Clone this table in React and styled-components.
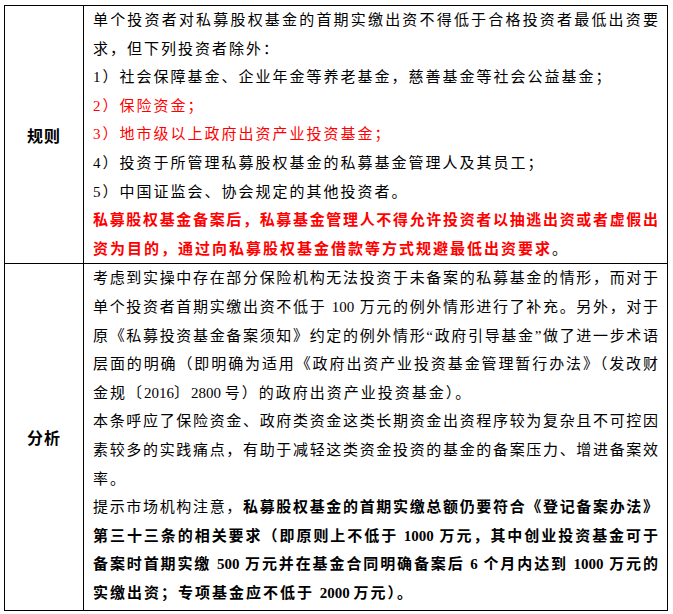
import React from "react";
import styled, { createGlobalStyle } from "styled-components";

const Global = createGlobalStyle`
  html, body { margin: 0; padding: 0; background: #fff; }
  body {
    padding: 5px 6px 0 4px;
    font-family: "Liberation Serif", "Noto Sans CJK SC", serif;
    color: #000;
  }
`;

const Table = styled.div`
  box-sizing: border-box;
  width: 664px;
  display: grid;
  grid-template-columns: 79px minmax(0, 1fr);
  border: 1px solid #000;
`;

const LabelCell = styled.div`
  box-sizing: border-box;
  display: flex;
  align-items: center;
  justify-content: center;
  border-right: 1px solid #000;
  border-bottom: ${(p) => (p.$last ? "none" : "1px solid #000")};
  font-family: "Noto Sans CJK SC", sans-serif;
  font-weight: 700;
  font-size: 16px;
  letter-spacing: 1px;
`;

const ContentCell = styled.div`
  box-sizing: border-box;
  min-width: 0;
  padding: ${(p) => (p.$last ? "0 9px 3px 9px" : "0 9px")};
  border-bottom: ${(p) => (p.$last ? "none" : "1px solid #000")};
`;

const Line = styled.div`
  font-size: 15px;
  line-height: 28.6px;
  letter-spacing: ${(p) => (p.$full ? "0" : "2px")};
  white-space: nowrap;
  text-align: ${(p) => (p.$full ? "justify" : "left")};
  text-align-last: ${(p) => (p.$full ? "justify" : "left")};
  color: ${(p) => (p.$red ? "#ff0000" : "#000")};
  font-weight: ${(p) => (p.$bold ? 700 : 400)};
`;

const Strong = styled.span`
  font-weight: 700;
`;

const Plain = styled.span`
  color: #000;
  font-weight: 400;
`;

const Num = styled.span`
  letter-spacing: 0;
`;

export default function App() {
  return (
    <>
      <Global />
      <Table>
        <LabelCell>规则</LabelCell>
        <ContentCell>
          <Line $full>单个投资者对私募股权基金的首期实缴出资不得低于合格投资者最低出资要</Line>
          <Line>求，但下列投资者除外：</Line>
          <Line>1）社会保障基金、企业年金等养老基金，慈善基金等社会公益基金；</Line>
          <Line $red>2）保险资金；</Line>
          <Line $red>3）地市级以上政府出资产业投资基金；</Line>
          <Line>4）投资于所管理私募股权基金的私募基金管理人及其员工；</Line>
          <Line>5）中国证监会、协会规定的其他投资者。</Line>
          <Line $full $red $bold>私募股权基金备案后，私募基金管理人不得允许投资者以抽逃出资或者虚假出</Line>
          <Line $red $bold>
            资为目的，通过向私募股权基金借款等方式规避最低出资要求<Plain>。</Plain>
          </Line>
        </ContentCell>

        <LabelCell $last>分析</LabelCell>
        <ContentCell $last>
          <Line $full>考虑到实操中存在部分保险机构无法投资于未备案的私募基金的情形，而对于</Line>
          <Line $full>单个投资者首期实缴出资不低于 100 万元的例外情形进行了补充。另外，对于</Line>
          <Line $full>原《私募投资基金备案须知》约定的例外情形“政府引导基金”做了进一步术语</Line>
          <Line $full>层面的明确（即明确为适用《政府出资产业投资基金管理暂行办法》（发改财</Line>
          <Line>
            金规〔<Num>2016</Num>〕<Num>2800 </Num>号）的政府出资产业投资基金）。
          </Line>
          <Line $full>本条呼应了保险资金、政府类资金这类长期资金出资程序较为复杂且不可控因</Line>
          <Line $full>素较多的实践痛点，有助于减轻这类资金投资的基金的备案压力、增进备案效</Line>
          <Line>率。</Line>
          <Line $full>
            提示市场机构注意，<Strong>私募股权基金的首期实缴总额仍要符合《登记备案办法》</Strong>
          </Line>
          <Line $full $bold>第三十三条的相关要求（即原则上不低于 1000 万元，其中创业投资基金可于</Line>
          <Line $full $bold>备案时首期实缴 500 万元并在基金合同明确备案后 6 个月内达到 1000 万元的</Line>
          <Line $bold>
            实缴出资；专项基金应不低于 <Num>2000 </Num>万元）。
          </Line>
        </ContentCell>
      </Table>
    </>
  );
}
